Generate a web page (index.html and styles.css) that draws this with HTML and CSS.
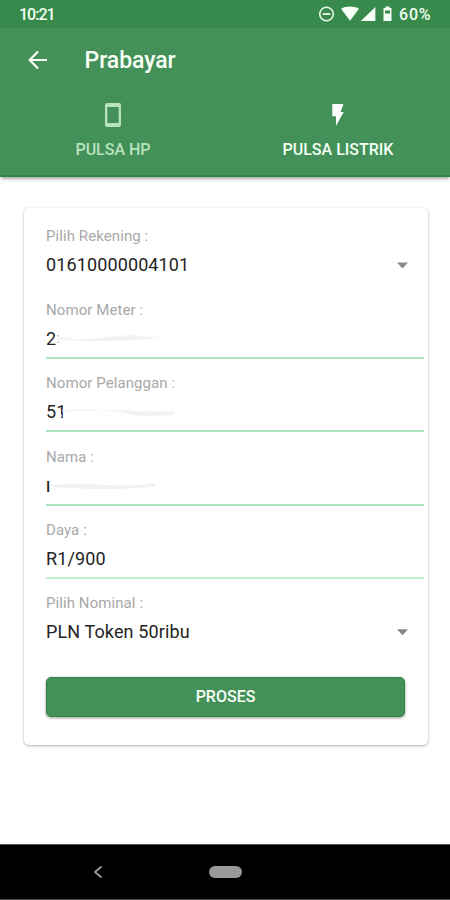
FILE: index.html
```html
<!DOCTYPE html>
<html lang="id">
<head>
<meta charset="utf-8">
<title>Prabayar</title>
<link rel="stylesheet" href="styles.css">
</head>
<body>
<div class="screen">
  <div class="status">
    <span class="time">10:21</span>
    <svg class="status-icons" width="76" height="18" viewBox="0 0 76 18" fill="#f5fff5">
      <circle cx="8.5" cy="9" r="6.8" fill="none" stroke="#e8f7e8" stroke-width="1.6"/>
      <path d="M4.7 8.2h7.6v1.7H4.7z"/>
      <path d="M23 3.8C27.500 .600 36.500 .600 41 3.800L32 15.800Z"/>
      <path d="M57.400 2V16H42.800Z"/>
      <path fill-rule="evenodd" d="M65.500 3h2V1.500h4V3h2v13h-8V3ZM67 5.500v3h5v-3Z"/>
    </svg>
    <span class="battery">60%</span>
  </div>
  <header class="appbar">
    <svg class="back" width="20" height="20" viewBox="0 0 20 20" fill="none" stroke="#f7fff7" stroke-width="2.200"><path d="M19 10H2M10 1.400 1.700 10l8.300 8.600"/></svg>
    <h1>Prabayar</h1>
  </header>
  <nav class="tabs">
    <div class="tab">
      <svg width="18" height="26" viewBox="0 0 18 26" fill="#b9e2be"><path fill-rule="evenodd" d="M3 1h12q2 0 2 2v20q0 2-2 2H3q-2 0-2-2V3q0-2 2-2ZM3.300 5v16h11.400V5Z"/></svg>
      <span>PULSA HP</span>
    </div>
    <div class="tab active">
      <svg width="18" height="26" viewBox="0 0 18 26" fill="#fff"><path d="M3.300 2h11.200l-3 8h3.200L7 24v-9.800H3.300Z"/></svg>
      <span>PULSA LISTRIK</span>
    </div>
  </nav>
  <main>
    <form class="card">
      <div class="field">
        <label>Pilih Rekening :</label>
        <div class="value">01610000004101<i class="caret"></i></div>
      </div>
      <div class="field lined">
        <label>Nomor Meter :</label>
        <div class="value">2<span class="remnant">:</span>
          <svg class="smear" width="140" height="22" viewBox="0 0 140 22"><path fill="#f3f3f3" d="M13 9Q38 13 62 9T114 10Q84 13 62 13T13 12Z"/></svg>
        </div>
      </div>
      <div class="field lined">
        <label>Nomor Pelanggan :</label>
        <div class="value">51
          <svg class="smear" width="140" height="22" viewBox="0 0 140 22"><path fill="#fff" d="M11 10.500l3-1 1 4 1 1-1 2-3-1Z"/><path fill="#f2f2f2" d="M16 9Q44 8 68 9T127 11Q132 14 124 14Q94 17 80 12T17 11Z"/></svg>
        </div>
      </div>
      <div class="field lined">
        <label>Nama :</label>
        <div class="value"><span class="initial">I</span>
          <svg class="smear" width="140" height="22" viewBox="0 0 140 22"><path fill="#f1f1f1" d="M5 10Q31 8 59 10T108 8Q112 11 106 12Q80 14 59 14T7 12Z"/></svg>
        </div>
      </div>
      <div class="field lined pale">
        <label>Daya :</label>
        <div class="value">R1/900</div>
      </div>
      <div class="field">
        <label>Pilih Nominal :</label>
        <div class="value">PLN Token 50ribu<i class="caret"></i></div>
      </div>
      <button type="button">PROSES</button>
    </form>
  </main>
  <footer class="navbar">
    <svg class="nav-back" width="10" height="14" viewBox="0 0 10 14" fill="none" stroke="#999" stroke-width="1.800"><path d="M8.500 1.500 2 7l6.500 5.500"/></svg>
    <span class="home"></span>
  </footer>
</div>
</body>
</html>
```
FILE: styles.css
```css
* { box-sizing: border-box; }
body { margin: 0; background: #fff; font-family: Roboto, "Liberation Sans", sans-serif; }
.screen { width: 450px; height: 900px; display: flex; flex-direction: column; overflow: hidden; }
.status { height: 28px; flex: none; display: flex; align-items: center; padding: 0 18px 0 19px; background: #378a4b; color: #f2fff2; font-size: 16px; font-weight: 500; }
.time { letter-spacing: -1px; }
.status-icons { margin-left: auto; margin-right: 5px; margin-top: -1px; }
.battery { width: 33px; letter-spacing: .8px; white-space: nowrap; }
.appbar { height: 64px; flex: none; display: flex; align-items: center; padding-left: 28px; background: #439159; }
h1 { margin: 2px 0 0 36.5px; color: #f7fff7; font-size: 23px; line-height: 30px; font-weight: 500; letter-spacing: -.05px; }
.tabs { height: 85px; flex: none; display: flex; background: #439159; border-bottom: 2px solid #318349; box-shadow: 0 3px 3px -1px #aaa; }
.tab { flex: 1; display: flex; flex-direction: column; align-items: center; padding: 10px 0 0 1px; color: #b9e2be; font-size: 16px; line-height: 20px; font-weight: 500; }
.tab span { margin-top: 12px; white-space: nowrap; }
.tab.active { color: #f4fff4; }
main { flex: 1; padding: 31px 22px 0 24px; }
.card { width: 404px; height: 537px; padding: 4px 4px 0 22px; border-radius: 5px; background: #fff; box-shadow: 0 1px 3px rgba(0,0,0,.3), 0 0 2px rgba(0,0,0,.06); }
.field { height: 73.4px; padding-top: 14.4px; display: flex; flex-direction: column; }
.field label { font-size: 15px; line-height: 20px; letter-spacing: .08px; color: #a8a8a8; }
.value { position: relative; margin-top: 9px; font-size: 18px; line-height: 20px; letter-spacing: .12px; color: #242424; white-space: nowrap; display: flex; }
.lined { border-bottom: 2px solid #ace5ba; }
.pale { border-color: #c2efcb; }
.caret { margin: 7px 16px 0 auto; width: 11px; height: 6px; background: #888; clip-path: polygon(0 0, 100% 0, 50% 100%); }
.smear { position: absolute; left: 0; top: -1px; }
.remnant { color: #aaa; font-size: 14px; line-height: 18px; }
.initial { margin-top: 1px; font-size: 15px; line-height: 21px; font-weight: 500; }
button { display: block; width: 359px; height: 40px; margin-top: 24.6px; padding: 0; border: 1px solid #318448; border-radius: 5px; background: #439159; color: #f7fff7; font: 500 16px/20px Roboto, sans-serif; box-shadow: 0 1px 3px rgba(0,0,0,.4); }
.navbar { height: 56px; flex: none; display: flex; align-items: center; padding-left: 93px; background: #000; border-top: 1px solid #555; border-bottom: 1px solid #444; }
.home { width: 33px; height: 12px; margin-left: 106px; border-radius: 6px; background: #999; }
```
